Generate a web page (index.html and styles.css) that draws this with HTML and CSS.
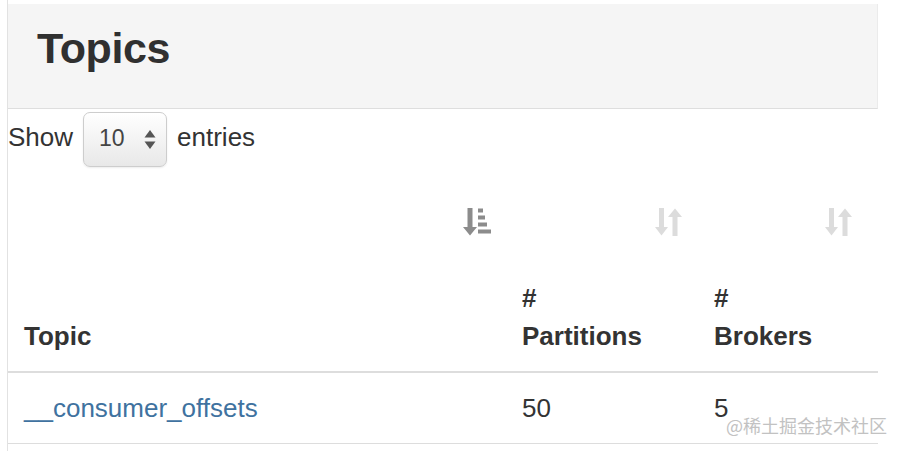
FILE: index.html
```html
<!DOCTYPE html>
<html lang="en">
<head>
<meta charset="utf-8">
<title>Topics</title>
<link rel="stylesheet" href="styles.css">
</head>
<body>
<div class="frame">
  <div class="page-header">
    <h1 class="title">Topics</h1>
  </div>
  <div class="length-row">
    <span class="length-label">Show</span>
    <span class="select">
      <span class="select-value">10</span>
      <svg class="select-arrows" width="12" height="20" viewBox="0 0 12 20">
        <polygon points="6,0 11.5,7.5 0.5,7.5" fill="#555"/>
        <polygon points="0.5,11.5 11.5,11.5 6,19" fill="#555"/>
      </svg>
    </span>
    <span class="length-label">entries</span>
  </div>
  <table class="topics">
    <colgroup>
      <col class="col-topic">
      <col class="col-partitions">
      <col class="col-brokers">
    </colgroup>
    <thead>
      <tr>
        <th>
          <div class="th-inner">
            <svg class="sort-icon sort-active" width="28" height="28" viewBox="0 0 28 28">
              <rect x="4.5" y="0" width="5" height="19.5"/>
              <polygon points="0,19 14,19 7,27.5"/>
              <rect x="15" y="0.5" width="5" height="4"/>
              <rect x="15" y="7.5" width="7" height="4"/>
              <rect x="15" y="14.5" width="9" height="4"/>
              <rect x="15" y="21.5" width="13" height="4"/>
            </svg>
            <div class="th-label">Topic</div>
          </div>
        </th>
        <th>
          <div class="th-inner">
            <svg class="sort-icon" width="28" height="28" viewBox="0 0 28 28">
              <rect x="4" y="0" width="5" height="19.5"/>
              <polygon points="0,19 13,19 6.5,27.5"/>
              <rect x="17.5" y="8.5" width="5" height="19.5"/>
              <polygon points="13,9 27,9 20,0.5"/>
            </svg>
            <div class="th-label">#<br>Partitions</div>
          </div>
        </th>
        <th>
          <div class="th-inner">
            <svg class="sort-icon sort-last" width="28" height="28" viewBox="0 0 28 28">
              <rect x="4" y="0" width="5" height="19.5"/>
              <polygon points="0,19 13,19 6.5,27.5"/>
              <rect x="17.5" y="8.5" width="5" height="19.5"/>
              <polygon points="13,9 27,9 20,0.5"/>
            </svg>
            <div class="th-label">#<br>Brokers</div>
          </div>
        </th>
      </tr>
    </thead>
    <tbody>
      <tr>
        <td><a class="topic-link" href="#">__consumer_offsets</a></td>
        <td>50</td>
        <td>5</td>
      </tr>
    </tbody>
  </table>
  <span class="watermark">@稀土掘金技术社区</span>
</div>
</body>
</html>
```

FILE: styles.css
```css
html, body {
  margin: 0;
  padding: 0;
  background: #ffffff;
}

body {
  font-family: "Liberation Sans", Arial, "Helvetica Neue", sans-serif;
  color: #333333;
  font-size: 26px;
  line-height: 38px;
}

.frame {
  position: relative;
  margin-left: 7px;
  width: 871px;
  height: 451px;
  border-left: 1px solid #e2e2e2;
  padding-top: 4px;
  box-sizing: border-box;
}

.page-header {
  background: #f5f5f5;
  height: 105px;
  box-sizing: border-box;
  border-bottom: 1px solid #dedede;
  border-right: 1px solid #ebebeb;
  padding: 23px 0 0 29px;
}

.title {
  margin: 0;
  font-size: 43px;
  line-height: 43px;
  font-weight: bold;
  letter-spacing: -0.4px;
  color: #303030;
}

.length-row {
  display: flex;
  align-items: center;
  height: 61px;
  gap: 10px;
  padding-left: 0;
}

.length-label {
  font-size: 26px;
  color: #333333;
  margin-bottom: 5px;
}

.select {
  display: flex;
  align-items: center;
  width: 84px;
  height: 55px;
  box-sizing: border-box;
  border: 1px solid #cdcdcd;
  border-radius: 7px;
  background: linear-gradient(#ffffff, #e8e8e8);
  box-shadow: 0 1px 2px rgba(0, 0, 0, 0.08);
  padding-left: 15px;
}

.select-value {
  font-size: 23px;
  color: #444444;
  margin-bottom: 3px;
}

.select-arrows {
  margin-left: auto;
  margin-right: 10px;
}

.topics {
  width: 870px;
  table-layout: fixed;
  border-collapse: separate;
  border-spacing: 0;
}

.col-topic { width: 498px; }
.col-partitions { width: 192px; }
.col-brokers { width: 180px; }

.topics th {
  padding: 16px;
  vertical-align: top;
  text-align: left;
  font-weight: bold;
  font-size: 26px;
  line-height: 38px;
  color: #333333;
  border-bottom: 2px solid #dddddd;
}

.th-inner {
  display: flex;
  flex-direction: column;
  height: 169px;
}

.sort-icon {
  align-self: flex-end;
  margin-top: 22px;
  margin-right: -1px;
  fill: #dcdcdc;
}

.sort-active {
  fill: #8c8c8c;
}

.sort-last {
  margin-right: 9px;
}

.th-label {
  margin-top: auto;
}

.topics td {
  padding: 16px;
  font-size: 26px;
  line-height: 38px;
  color: #333333;
  border-bottom: 1px solid #dddddd;
}

.topic-link {
  color: #40729f;
  text-decoration: none;
}

.watermark {
  position: absolute;
  left: 718px;
  top: 414px;
  font-family: "Noto Sans CJK SC", sans-serif;
  font-size: 18px;
  line-height: 22px;
  color: #c2c2c2;
  white-space: nowrap;
}
```
